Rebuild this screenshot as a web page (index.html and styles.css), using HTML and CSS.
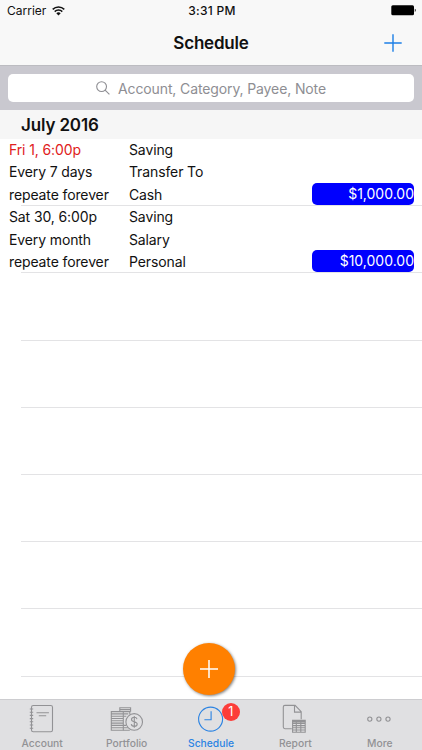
FILE: index.html
```html
<!DOCTYPE html>
<html lang="en">
<head>
  <meta charset="UTF-8">
  <title>Schedule</title>
  <link rel="stylesheet" href="styles.css">
</head>
<body>
  <div class="app">
    <header class="top-bar">
      <div class="status-bar">
        <div class="carrier">
          <span>Carrier</span>
          <svg class="wifi" width="13" height="10" viewBox="0 0 13 10" fill="none" stroke="#111" stroke-width="1.5">
            <path d="M.7 3.4a8.3 8.3 0 0 1 11.6 0M2.7 5.6a5.4 5.4 0 0 1 7.6 0"/>
            <path d="M6.5 9.5 4.3 7.3a3.1 3.1 0 0 1 4.4 0z" fill="#111" stroke="none"/>
          </svg>
        </div>
        <div class="time">3:31 PM</div>
        <svg class="battery" width="26" height="11" viewBox="0 0 26 11">
          <rect x="0.3" y="0.3" width="22.7" height="10" rx="1.5" fill="#000"/>
          <path d="M23.8 3.7c1.3.3 1.3 2.9 0 3.2z" fill="#000"/>
        </svg>
      </div>
      <div class="nav-bar">
        <h1>Schedule</h1>
        <svg class="nav-add" width="18" height="18" viewBox="0 0 18 18" stroke="#1c7fe6" stroke-width="1.4">
          <path d="M9 .3v17.4M.3 9h17.4"/>
        </svg>
      </div>
    </header>

    <div class="search-bar">
      <div class="search-field">
        <svg width="14" height="14" viewBox="0 0 14 14" fill="none" stroke="#8e8e93" stroke-width="1.1">
          <circle cx="5.6" cy="5.6" r="4.9"/>
          <path d="m9.1 9.1 4.3 4.3"/>
        </svg>
        <span>Account, Category, Payee, Note</span>
      </div>
    </div>

    <h2 class="section-header">July 2016</h2>

    <main class="list">
      <div class="row">
        <div class="when">
          <p class="overdue">Fri 1, 6:00p</p>
          <p>Every 7 days</p>
          <p>repeate forever</p>
        </div>
        <div class="what">
          <p>Saving</p>
          <p>Transfer To</p>
          <p>Cash</p>
        </div>
        <div class="amount">$1,000.00</div>
      </div>
      <div class="row">
        <div class="when">
          <p>Sat 30, 6:00p</p>
          <p>Every month</p>
          <p>repeate forever</p>
        </div>
        <div class="what">
          <p>Saving</p>
          <p>Salary</p>
          <p>Personal</p>
        </div>
        <div class="amount">$10,000.00</div>
      </div>
      <div class="row"></div>
      <div class="row"></div>
      <div class="row"></div>
      <div class="row"></div>
      <div class="row"></div>
      <div class="row"></div>
    </main>

    <nav class="tab-bar">
      <a class="tab">
        <svg width="34" height="34" viewBox="0 0 34 34">
          <rect x="6.5" y="2.5" width="21" height="26.3" rx="1.8"/>
          <path d="M4.8 6h3.4M4.8 9.2h3.4M4.8 12.4h3.4M4.8 15.6h3.4M4.8 18.8h3.4M4.8 22h3.4M4.8 25.2h3.4M11.5 9.8h12.4M13.8 12.8h7.4"/>
        </svg>
        <span>Account</span>
      </a>
      <a class="tab">
        <svg width="34" height="34" viewBox="0 0 34 34">
          <path d="M1.3 8.6h12v18.6h-12zM1.3 10.9h12M1.3 13.2h12M1.3 15.5h12M1.3 17.8h12M1.3 20.1h12M1.3 22.4h12M1.3 24.8h12"/>
          <path d="M9.8 8.3V4.8h10.8v3.5zM9.8 6.5h10.8M13.3 8.6h6.5v3M13.3 10.9h5M13.3 13.2h3M13.3 22.4h2.7M13.3 24.8h4.5M13.3 27.2h6.5"/>
          <circle cx="24.2" cy="18.9" r="8.3"/>
          <path d="M27 16.1c-.3-1.2-1.3-1.8-2.7-1.8-1.6 0-2.8.8-2.8 2.1 0 3.1 5.7 1.5 5.7 4.7 0 1.4-1.2 2.3-2.9 2.3-1.6 0-2.8-.8-3-2.2M24.3 12.9v11.9"/>
        </svg>
        <span>Portfolio</span>
      </a>
      <a class="tab active">
        <svg width="34" height="34" viewBox="0 0 34 34">
          <circle cx="16.6" cy="16.1" r="12"/>
          <path d="M17.1 8.2v8.5h-6.7"/>
        </svg>
        <span>Schedule</span>
        <b class="badge">1</b>
      </a>
      <a class="tab">
        <svg width="34" height="34" viewBox="0 0 34 34">
          <path d="M13.8 25.7H6.9c-1 0-1.6-.6-1.6-1.6V4c0-1 .6-1.6 1.6-1.6h10.2l6.1 6.3v7.5M16.5 2.6v6.5H23"/>
          <path d="M14.6 17.4h12.6v11.8H14.6zM14.6 20.4h12.6M14.6 22.6h12.6M14.6 24.8h12.6M14.6 27h12.6M18.3 17.4v11.8M22.8 17.4v11.8"/>
          <path d="M14.6 18.5h12.6" stroke-width="2"/>
        </svg>
        <span>Report</span>
      </a>
      <a class="tab">
        <svg width="34" height="34" viewBox="0 0 34 34">
          <circle cx="6.8" cy="16.1" r="2.1"/>
          <circle cx="15.9" cy="16.1" r="2.1"/>
          <circle cx="25" cy="16.1" r="2.1"/>
        </svg>
        <span>More</span>
      </a>
    </nav>

    <!-- floating add button over the list -->
    <div class="fab">
      <svg width="18" height="18" viewBox="0 0 18 18" stroke="#fff" stroke-width="1.5">
        <path d="M9 0v18M0 9h18"/>
      </svg>
    </div>
  </div>
</body>
</html>
```
FILE: styles.css
```css
:root {
  --blue: #2b83e2;
  --gray: #929295;
  --line: #e3e3e5;
}

* {
  box-sizing: border-box;
}

body {
  margin: 0;
  font-family: Inter, "Liberation Sans", sans-serif;
  color: #111;
  background-color: #fff;
}

h1, h2, p {
  margin: 0;
}

.app {
  position: relative;
  display: flex;
  flex-direction: column;
  height: 750px;
  overflow: hidden;
}

.top-bar {
  height: 65px;
  background-color: #f8f8f8;
}

.status-bar {
  display: grid;
  grid-template-columns: 1fr auto 1fr;
  align-items: center;
  height: 21px;
  padding: 0 5px 0 7px;
  font-size: 12px;
}

.carrier {
  display: flex;
  align-items: center;
  gap: 6px;
}

.time {
  font-weight: 500;
  letter-spacing: 0.3px;
}

.battery {
  justify-self: end;
}

.nav-bar {
  display: grid;
  grid-template-columns: 1fr auto 1fr;
  align-items: center;
  height: 43px;
  padding: 0 20px;
}

.nav-bar h1 {
  grid-column: 2;
  font-size: 17px;
  font-weight: 600;
  letter-spacing: -0.2px;
}

.nav-add {
  justify-self: end;
}

.search-bar {
  height: 45px;
  padding: 8px 8px 7px;
  background-color: #c9c8cf;
  border-top: 1px solid #bcbcc1;
}

.search-field {
  display: flex;
  align-items: center;
  justify-content: center;
  gap: 8px;
  height: 28px;
  border-radius: 5px;
  background-color: #fff;
  color: #8e8e93;
  font-size: 14px;
  letter-spacing: -0.12px;
}

.section-header {
  height: 29px;
  padding-left: 21px;
  background-color: #f6f6f6;
  font-size: 17px;
  font-weight: 600;
  letter-spacing: -0.15px;
  line-height: 31px;
}

.list {
  flex: 1;
  overflow: hidden;
}

.row {
  display: grid;
  grid-template-columns: 120px 1fr 102px;
  height: 67.2px;
  padding: 0 8px 0 9px;
  font-size: 14px;
  letter-spacing: -0.12px;
  line-height: 22.4px;
  background: linear-gradient(var(--line), var(--line)) 21px 100% / 100% 1px no-repeat;
}

.overdue {
  color: #e02020;
}

.amount {
  align-self: end;
  height: 22px;
  margin-bottom: 1px;
  border-radius: 5px;
  background-color: #0000fe;
  color: #fff;
  text-align: right;
  letter-spacing: 0;
}

.tab-bar {
  display: flex;
  height: 51px;
  border-top: 1px solid #cdcdd0;
  background-color: #e0e0e2;
}

.tab {
  position: relative;
  display: flex;
  flex: 1;
  flex-direction: column;
  align-items: center;
  padding-top: 3px;
  color: var(--gray);
  font-size: 10.3px;
  font-weight: 500;
  line-height: 12px;
}

.tab svg {
  fill: none;
  stroke: currentColor;
  stroke-width: 1.1;
}

.tab.active {
  color: var(--blue);
}

.badge {
  position: absolute;
  top: 3px;
  left: 53px;
  width: 18px;
  height: 18px;
  border-radius: 50%;
  background-color: #fc3d39;
  color: #fff;
  font-size: 12.5px;
  font-weight: 400;
  line-height: 18px;
  text-align: center;
}

.fab {
  position: absolute;
  top: 643px;
  left: 183px;
  display: flex;
  align-items: center;
  justify-content: center;
  width: 52px;
  height: 52px;
  border-radius: 50%;
  background-color: #ff8000;
  box-shadow: 1px 1px 3px rgba(0, 0, 0, 0.5);
}
```
